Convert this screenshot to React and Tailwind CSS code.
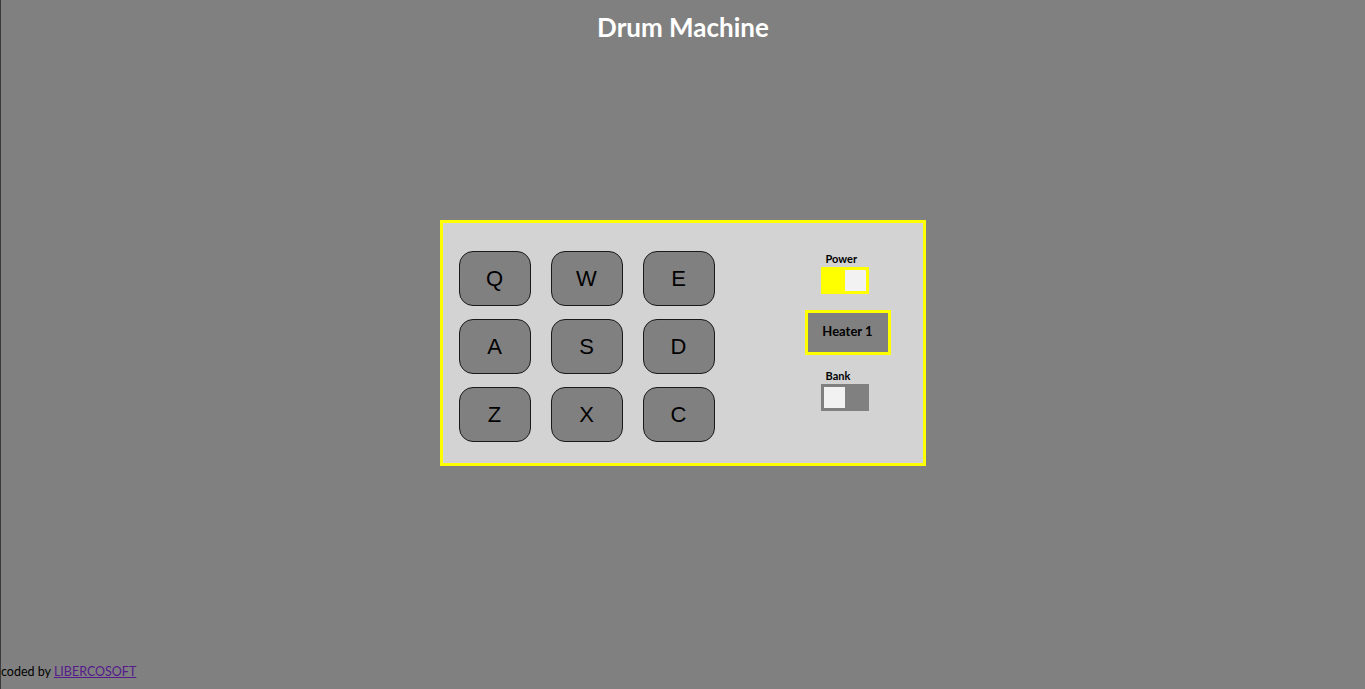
export default function App() {
    const pads = ["Q", "W", "E", "A", "S", "D", "Z", "X", "C"];

    return (
        <div className="h-[689px] grid grid-rows-[52px_1fr_56px] bg-[#808080] border-l border-[#3a3a3a] overflow-hidden" style={{ fontFamily: "Lato, 'Open Sans', sans-serif" }}>
            <h1 className="text-center text-white font-bold text-[26px] leading-[54px]">Drum Machine</h1>

            {/* Machine */}
            <div className="flex items-center justify-center">
                <div className="w-[486px] h-[246px] border-[3px] border-[#ffff00] bg-[#d3d3d3] flex pl-[16px] pt-[28px] -ml-px">
                    <div className="grid grid-cols-[72px_72px_72px] gap-x-[20px] gap-y-[13px] content-start">
                        {pads.map((key) => (
                            <button
                                key={key}
                                className="h-[55px] w-[72px] rounded-[14px] border border-[#1a1a1a] bg-[#808080] text-[22px] text-black flex items-center justify-center"
                                style={{ fontFamily: "'Liberation Sans', Arial, sans-serif" }}
                            >
                                {key}
                            </button>
                        ))}
                    </div>

                    {/* Controls */}
                    <div className="ml-[90px] w-[86px] mt-[3px] flex flex-col items-start text-black">
                        <div className="w-[48px] ml-[16px]">
                            <p className="text-[11px] font-bold leading-[13px] pl-[5px] -translate-y-[2px]">Power</p>
                            <div className="h-[27px] w-[48px] border-[3px] border-[#ffff00] bg-[#ffff00] flex justify-end">
                                <div className="h-[21px] w-[21px] bg-[#f2f2f2]"></div>
                            </div>
                        </div>

                        <div className="mt-[16px] h-[45px] w-[86px] border-[3px] border-[#ffff00] bg-[#808080] flex items-center justify-center text-[13px] font-bold">
                            Heater 1
                        </div>

                        <div className="w-[48px] ml-[16px] mt-[16px]">
                            <p className="text-[11px] font-bold leading-[13px] pl-[5px] -translate-y-[2px]">Bank</p>
                            <div className="h-[27px] w-[48px] border-[3px] border-[#808080] bg-[#808080] flex justify-start">
                                <div className="h-[21px] w-[21px] bg-[#f2f2f2]"></div>
                            </div>
                        </div>
                    </div>
                </div>
            </div>

            <footer className="self-end pb-[9px] text-[12.5px] leading-[16px] text-black">
                coded by <a href="#" className="text-[#551a8b] underline">LIBERCOSOFT</a>
            </footer>
        </div>
    );
}
